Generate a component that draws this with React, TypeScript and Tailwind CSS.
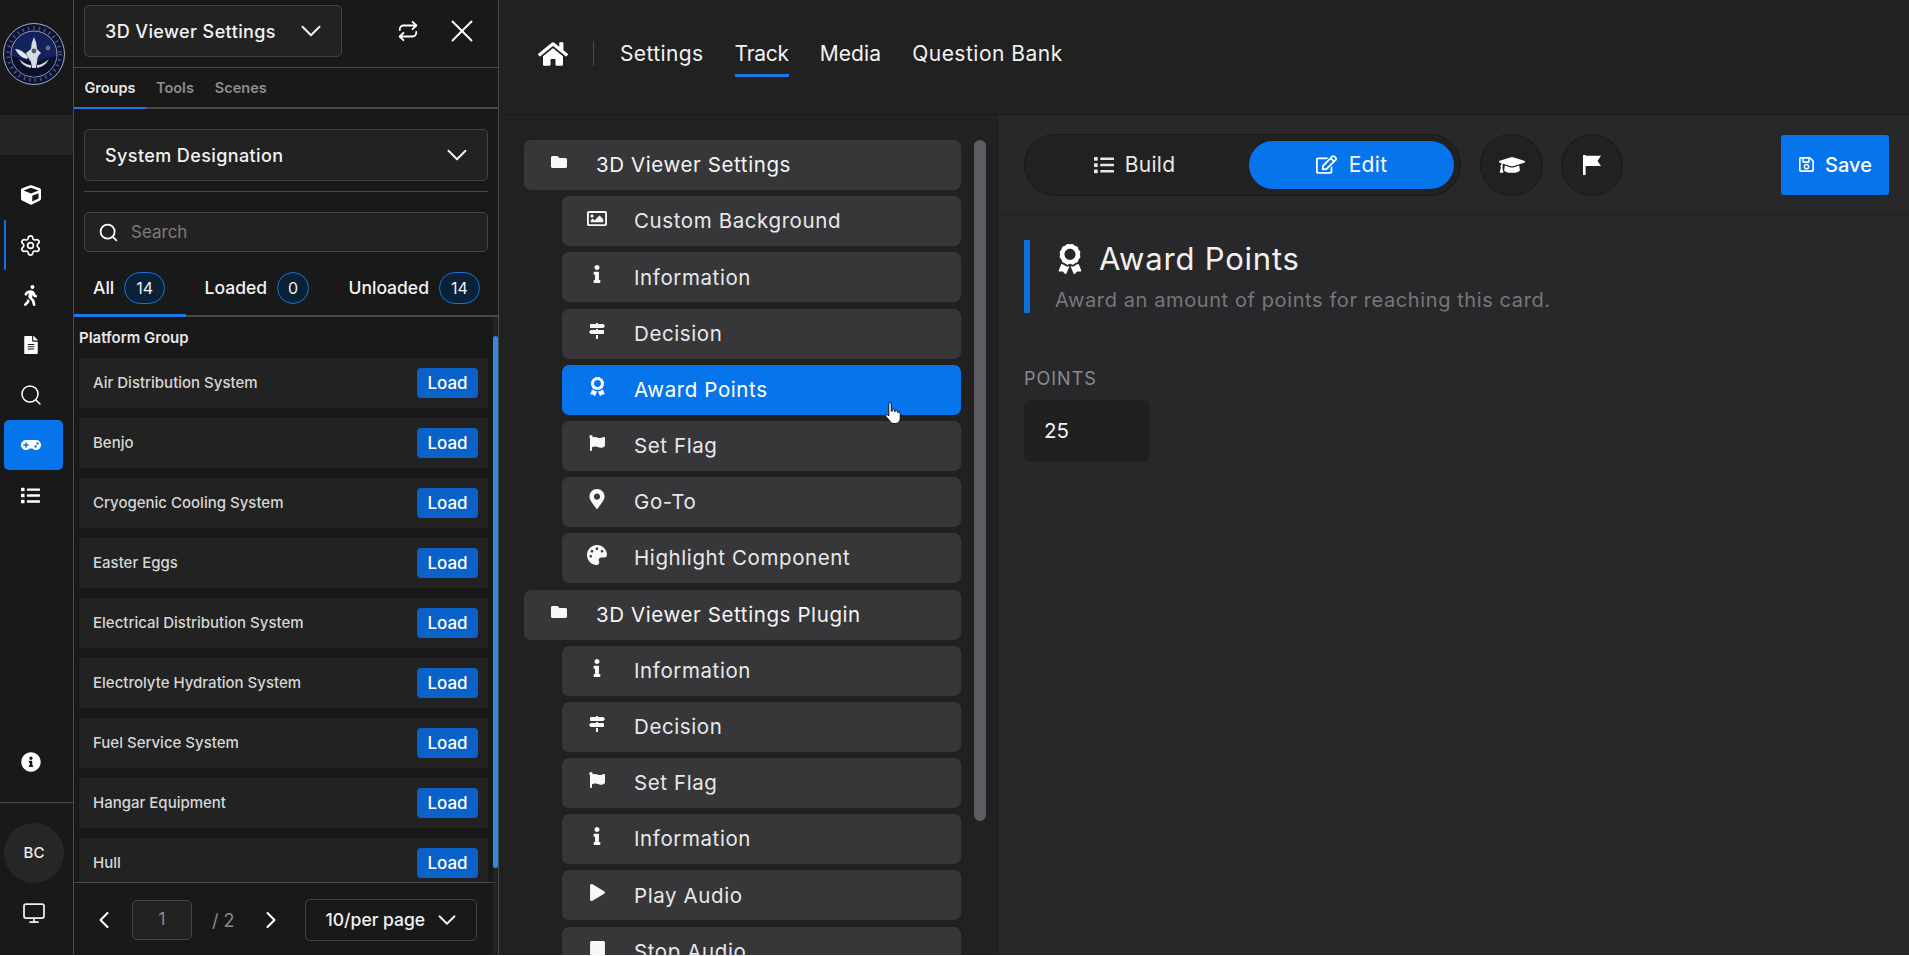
import type { ReactNode } from 'react'
import { ChevronDown, ChevronLeft, ChevronRight, Monitor, Repeat, Search, Settings, X } from 'lucide-react'
import {
  FaAward,
  FaCube,
  FaFileAlt,
  FaFlag,
  FaFolder,
  FaGamepad,
  FaGraduationCap,
  FaHome,
  FaInfo,
  FaInfoCircle,
  FaList,
  FaMapMarkerAlt,
  FaMapSigns,
  FaPalette,
  FaPlay,
  FaRegEdit,
  FaRegImage,
  FaRegSave,
  FaStop,
  FaWalking,
} from 'react-icons/fa'

const heading = "font-['Inter',sans-serif]"
const body = "font-['Inter',sans-serif]"

const groups = [
  'Air Distribution System',
  'Benjo',
  'Cryogenic Cooling System',
  'Easter Eggs',
  'Electrical Distribution System',
  'Electrolyte Hydration System',
  'Fuel Service System',
  'Hangar Equipment',
  'Hull',
]

const tree: { label: string; icon: ReactNode; child?: boolean; active?: boolean }[] = [
  { label: '3D Viewer Settings', icon: <FaFolder size={16} /> },
  { label: 'Custom Background', icon: <FaRegImage size={21} />, child: true },
  { label: 'Information', icon: <FaInfo size={18} />, child: true },
  { label: 'Decision', icon: <FaMapSigns size={16} />, child: true },
  { label: 'Award Points', icon: <FaAward size={19} />, child: true, active: true },
  { label: 'Set Flag', icon: <FaFlag size={16} />, child: true },
  { label: 'Go-To', icon: <FaMapMarkerAlt size={20} />, child: true },
  { label: 'Highlight Component', icon: <FaPalette size={20} />, child: true },
  { label: '3D Viewer Settings Plugin', icon: <FaFolder size={16} /> },
  { label: 'Information', icon: <FaInfo size={18} />, child: true },
  { label: 'Decision', icon: <FaMapSigns size={16} />, child: true },
  { label: 'Set Flag', icon: <FaFlag size={16} />, child: true },
  { label: 'Information', icon: <FaInfo size={18} />, child: true },
  { label: 'Play Audio', icon: <FaPlay size={17} />, child: true },
  { label: 'Stop Audio', icon: <FaStop size={17} />, child: true },
]

function Logo() {
  return (
    <svg width="64" height="64" viewBox="0 0 64 64">
      <circle cx="32" cy="32" r="30.5" fill="#0c1436" stroke="#a9adb8" strokeWidth="1" />
      <circle cx="32" cy="32" r="26" fill="none" stroke="#4d5474" strokeWidth="3.5" strokeDasharray="1.5 4" />
      <circle cx="32" cy="32" r="23" fill="#14225c" stroke="#b9bcc6" strokeWidth="0.8" />
      <path d="M9.5 34 Q22 37 32 41 Q43 36 54.5 34 Q52 52 32 54.8 Q12 52 9.5 34Z" fill="#0a0f2a" />
      <path d="M32 15 Q35 21 35 27 L39 31 Q35 34 35 40 L34 46 L30 46 L29 40 Q25 34 24 31 L29 27 Q29 21 32 15Z" fill="#d8dae0" />
      <path d="M13 27 Q20 27 26 35 L25 37 Q18 36 13 27Z" fill="#e4e6ea" />
      <path d="M17 37 Q24 43 29 43 L29 46 Q21 45 17 37Z M47 37 Q40 43 35 43 L35 46 Q43 45 47 37Z" fill="#d2d4da" />
      <circle cx="32" cy="29" r="2.4" fill="#555a6c" />
      <circle cx="46" cy="26" r="2.4" fill="#6a6f80" />
    </svg>
  )
}

function SideIcon({ children, active, line }: { children: ReactNode; active?: boolean; line?: boolean }) {
  return (
    <div className="relative flex h-[50px] w-full items-center">
      {line && <div className="absolute left-[4px] top-0 h-[50px] w-[2px] rounded bg-[#0a74e8]" />}
      <div className={`ml-[4px] flex h-[50px] w-[59px] items-center justify-center rounded-[5px] pr-[6px] ${active ? 'bg-[#0674ea]' : ''}`}>
        {children}
      </div>
    </div>
  )
}

function Sidebar() {
  return (
    <aside className="flex w-[74px] shrink-0 flex-col border-r border-[#4a4a4a] bg-[#191919] text-white">
      <div className="flex h-[115px] shrink-0 items-center pb-[8px] pl-[2px]">
        <Logo />
      </div>
      <div className="h-[40px] shrink-0 bg-[#232323]" />
      <div className="mt-[15px] flex flex-col">
        <SideIcon><FaCube size={20} /></SideIcon>
        <SideIcon line><Settings size={23} strokeWidth={1.75} /></SideIcon>
        <SideIcon><FaWalking size={21} /></SideIcon>
        <SideIcon><FaFileAlt size={18} /></SideIcon>
        <SideIcon><Search size={24} strokeWidth={1.5} /></SideIcon>
        <SideIcon active><FaGamepad size={20} /></SideIcon>
        <SideIcon><FaList size={19} /></SideIcon>
      </div>
      <div className="mt-auto flex flex-col">
        <SideIcon><FaInfoCircle size={20} /></SideIcon>
        <div className="mt-[15px] h-px bg-[#4a4a4a]" />
        <div className={`ml-[4px] mt-[20px] flex h-[60px] w-[60px] items-center justify-center rounded-full bg-[#262626] text-[15px] font-medium text-[#eee] ${body}`}>
          BC
        </div>
        <div className="mb-[27px] mt-[15px] flex h-[30px] items-center justify-center pr-[5px] text-[#eee]">
          <Monitor size={24} strokeWidth={1.75} />
        </div>
      </div>
    </aside>
  )
}

function Dropdown({ label, className }: { label: string; className: string }) {
  return (
    <div className={`flex items-center justify-between rounded-[5px] border border-[#424242] bg-[#222222] pl-[20px] text-[18px] font-medium tracking-[0.4px] text-[#f2f2f2] ${heading} ${className}`}>
      <span>{label}</span>
      <ChevronDown size={34} strokeWidth={1.4} />
    </div>
  )
}

function CountTab({ label, count }: { label: string; count: number }) {
  return (
    <div className={`mt-[2px] flex h-[34px] items-center gap-[10px] text-[17.5px] font-medium text-[#f2f2f2] ${body}`}>
      <span>{label}</span>
      <span className={`flex h-[32px] items-center justify-center rounded-full border border-[#1673d8] bg-[#0a2138] text-[16px] font-normal ${count ? 'w-[41px]' : 'w-[32px]'}`}>
        {count}
      </span>
    </div>
  )
}

function Panel() {
  return (
    <section className={`flex w-[425px] shrink-0 flex-col border-r border-[#484848] bg-[#191919] ${body}`}>
      <div className="h-[68px] shrink-0 border-b border-[#484848] pl-[10px]">
        <div className="flex h-[62px] items-center">
          <Dropdown label="3D Viewer Settings" className="h-[52px] w-[258px] pr-[13px]" />
          <div className="ml-[55px] text-white"><Repeat size={22} strokeWidth={2} /></div>
          <div className="ml-[24px] text-white"><X size={38} strokeWidth={1.2} /></div>
        </div>
      </div>

      <div className="flex h-[41px] shrink-0 items-stretch border-b-2 border-[#484848] text-[14.5px] font-semibold">
        <div className="-mb-[2px] flex w-[72px] items-center justify-center border-b-2 border-[#1a78e6] text-[#e8e8e8]">Groups</div>
        <div className="ml-[10px] flex items-center text-[#8e8e8e]">Tools</div>
        <div className="ml-[21px] flex items-center text-[#8e8e8e]">Scenes</div>
      </div>

      <div className="flex flex-col px-[10px] pt-[20px]">
        <Dropdown label="System Designation" className="h-[52px] w-[404px] pr-[13px]" />
        <div className="mt-[10px] h-px w-[404px] bg-[#4a4a4a]" />
        <div className="mt-[20px] flex h-[40px] w-[404px] items-center rounded-[5px] border border-[#424242] bg-[#222222] pl-[13px] text-[17px] text-[#7c7c7c]">
          <Search size={21} strokeWidth={2} className="text-white" />
          <span className="ml-[12px] pt-[2px]">Search</span>
        </div>
      </div>

      <div className="mt-[17px] flex h-[48px] shrink-0 items-start justify-between border-b-2 border-[#484848] pl-[19px] pr-[18px]">
        <CountTab label="All" count={14} />
        <CountTab label="Loaded" count={0} />
        <CountTab label="Unloaded" count={14} />
      </div>
      <div className="-mt-[3px] h-[3px] w-[112px] shrink-0 bg-[#1a78e6]" />

      <div className="flex min-h-0 flex-1">
        <div className="min-w-0 flex-1 overflow-hidden pl-[5px] pr-[5px]">
          <div className="flex h-[41px] items-center pt-[1px] text-[15px] font-semibold text-[#e8e8e8]">Platform Group</div>
          {groups.map(name => (
            <div key={name} className="mb-[10px] flex h-[50px] items-center justify-between bg-[#222222] pl-[14px] pr-[10px]">
              <span className="text-[15px] font-medium text-[#d6d6d6]">{name}</span>
              <button className="flex h-[30px] w-[61px] items-center justify-center rounded-[4px] bg-[#0a62c9] pt-[2px] text-[17px] font-medium text-white">Load</button>
            </div>
          ))}
        </div>
        <div className="w-[5px] shrink-0 bg-[#222222]">
          <div className="mt-[19px] h-[532px] w-[5px] rounded-full bg-[#3287ea]" />
        </div>
      </div>

      <div className="flex h-[73px] shrink-0 items-center border-r-[5px] border-t border-[#222222] border-t-[#484848] pl-[16px] pt-[2px]">
        <ChevronLeft size={28} strokeWidth={1.75} className="text-white" />
        <div className="ml-[14px] flex h-[40px] w-[60px] items-center justify-center rounded-[5px] border border-[#424242] bg-[#222222] text-[17px] text-[#8a8a8a]">1</div>
        <span className="ml-[20px] text-[18px] text-[#8a8a8a]">/ 2</span>
        <ChevronRight size={28} strokeWidth={1.75} className="ml-[22px] text-white" />
        <div className="ml-[20px] flex h-[42px] w-[172px] items-center justify-between rounded-[5px] border border-[#424242] pl-[20px] pr-[14px] text-[17.5px] font-medium text-[#f2f2f2]">
          <span>10/per page</span>
          <ChevronDown size={30} strokeWidth={1.5} />
        </div>
      </div>
    </section>
  )
}

function TreeRow({ label, icon, child, active }: { label: string; icon: ReactNode; child?: boolean; active?: boolean }) {
  return (
    <div
      className={`mb-[6.2px] flex h-[50px] shrink-0 items-center rounded-[7px] text-[20.5px] tracking-[0.6px] ${child ? 'ml-[38px] text-[#e8e8e8]' : 'text-[#f4f4f4]'} ${active ? 'bg-[#0674ea] text-white' : 'bg-[#37373a]'}`}
    >
      <div className="ml-[25px] flex w-[20px] shrink-0 justify-center pb-[6px] text-[#f8f8f8]">{icon}</div>
      <span className="ml-[27px] pt-[1px]">{label}</span>
    </div>
  )
}

function Main() {
  return (
    <main className={`flex min-w-0 flex-1 flex-col bg-[#212121] text-white ${heading}`}>
      <nav className="flex h-[115px] shrink-0 items-center border-b border-[#191919] pb-[7px] pl-[39px] text-[21px] tracking-[0.4px] text-[#f2f2f2]">
        <FaHome size={30} className="text-white" />
        <div className="ml-[25px] h-[25px] w-px bg-[#4a4a4a]" />
        <span className="ml-[26px]">Settings</span>
        <span className="relative ml-[31px] tracking-[-0.3px]">
          Track
          <span className="absolute -bottom-[8px] left-0 h-[3px] w-full bg-[#1a78e6]" />
        </span>
        <span className="ml-[31px] tracking-[0.1px]">Media</span>
        <span className="ml-[31px] tracking-[0.5px]">Question Bank</span>
      </nav>

      <div className="relative flex min-h-0 flex-1">
        <div className="flex w-[501px] shrink-0 overflow-hidden border-r border-[#2a2a2a] pl-[25px] pt-[25px]">
          <div className="flex w-[437px] shrink-0 flex-col">
            {tree.map((row, i) => (
              <TreeRow key={i} {...row} />
            ))}
          </div>
          <div className="ml-[13px] h-[681px] w-[12px] shrink-0 rounded-full bg-[#5e5e62]" />
        </div>

        <div className="min-w-0 flex-1 bg-[#28282a]">
          <div className="flex h-[100px] items-center border-b border-[#1f1f1f] pl-[24px] pr-[20px]">
            <div className="flex h-[62px] w-[437px] items-center justify-between rounded-full border border-[#191919] bg-[#212121] pl-[7px] pr-[6px] text-[21px] tracking-[0.3px]">
              <div className="flex w-[205px] items-center justify-center gap-[11px] text-[#e8e8e8]">
                <FaList size={20} />
                <span>Build</span>
              </div>
              <div className="flex h-[48px] w-[205px] items-center justify-center gap-[12px] rounded-full bg-[#0674ea]">
                <FaRegEdit size={21} />
                <span>Edit</span>
              </div>
            </div>
            <div className="ml-[19px] flex h-[62px] w-[63px] items-center justify-center rounded-full border border-[#191919] bg-[#212121]">
              <FaGraduationCap size={26} />
            </div>
            <div className="ml-[18px] flex h-[62px] w-[62px] items-center justify-center rounded-full border border-[#191919] bg-[#212121]">
              <svg width="18" height="20" viewBox="0 0 18 20" fill="#fff">
                <path d="M0 0h2.6v.8H18l-3.5 5.2L18 11H2.6v9H0z" />
              </svg>
            </div>
            <button className="ml-auto flex h-[60px] w-[108px] items-center justify-center gap-[10px] rounded-[3px] bg-[#0674ea] text-[20px] font-medium">
              <FaRegSave size={17} />
              <span>Save</span>
            </button>
          </div>

          <div className="pl-[24px] pt-[25px]">
            <div className="flex h-[73px] flex-col justify-between border-l-[6px] border-[#0f6fdc] pl-[25px]">
              <div className="flex h-[37px] items-center gap-[14px]">
                <FaAward size={30} />
                <span className="text-[31px] leading-[36px] tracking-[0.8px] text-[#f2f2f2]">Award Points</span>
              </div>
              <p className="text-[20px] leading-[26px] tracking-[0.6px] text-[#77777b]">Award an amount of points for reaching this card.</p>
            </div>
            <div className="mt-[55px] text-[18px] leading-[22px] tracking-[1px] text-[#8a8a8e]">POINTS</div>
            <div className="mt-[10px] flex h-[62px] w-[126px] items-center rounded-[6px] bg-[#202021] pl-[20px] text-[20.5px] text-[#f2f2f2]">25</div>
          </div>
        </div>

        <svg className="absolute left-[386px] top-[286px]" width="17" height="24" viewBox="0 0 17 24">
          <path
            d="M5 1.5c.8 0 1.3.6 1.3 1.4v7.3l1-.1V8.6c0-.7 2-.7 2.1.1v1.7l.9.1V9.7c0-.7 2-.6 2.1.2v1.4l.8.1c.2-.5 2-.3 2 .7v5.4c0 2.3-1.5 5-4.6 5H9c-2 0-3-1-4-2.3L1 15.5c-1-1.3.6-2.6 1.8-1.5l1 1V3c0-.9.4-1.5 1.2-1.5z"
            fill="#fff"
            stroke="#111"
            strokeWidth="1"
          />
        </svg>
      </div>
    </main>
  )
}

export default function App() {
  return (
    <div className="flex h-[955px] w-full overflow-hidden">
      <Sidebar />
      <Panel />
      <Main />
    </div>
  )
}
